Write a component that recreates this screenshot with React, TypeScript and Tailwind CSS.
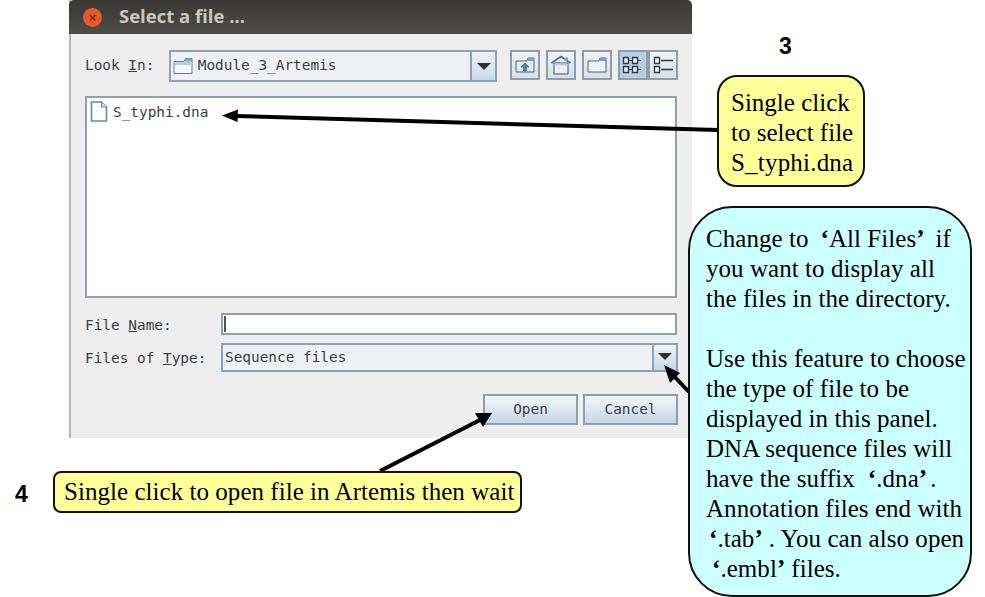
import React from "react";

const mono = "font-['DejaVu_Sans_Mono',monospace] text-[14.4px] text-[#3a3f45]";
const serif = "font-['Liberation_Serif',serif] text-[25px] leading-[30px] text-black whitespace-pre";
const step = "font-['Liberation_Sans',sans-serif] font-bold text-[23px] leading-none text-black";

const FolderIcon = () => (
  <svg width="20" height="18" viewBox="0 0 20 18" fill="none">
    <path d="M1 4.500h10l1.500-3H19v15H1z" fill="#f4f6f9" stroke="#5f7f9f" strokeWidth="1" />
    <path d="M1.500 5h17v3h-17z" fill="#b9cde2" />
    <path d="M12.500 1.500H19v3h-8z" fill="#7f9fc4" />
  </svg>
);

const FileIcon = () => (
  <svg width="18" height="21" viewBox="0 0 18 21" fill="none">
    <path d="M1.500 1h10l5 5v14h-15z" fill="#fff" stroke="#5b8ab8" strokeWidth="1.6" />
    <path d="M11.500 1v5h5" fill="#dbe6f1" stroke="#5b8ab8" strokeWidth="1.2" />
  </svg>
);

const UpIcon = () => (
  <svg width="20" height="18" viewBox="0 0 20 18" fill="none">
    <path d="M1 5h11l1-3h6v14H1z" fill="#e4ebf2" stroke="#56606c" />
    <path d="M13 2h6v3h-7z" fill="#7f9fc4" />
    <path d="M10 7l-4 4h2.500v4h3v-4H14z" fill="#4f86bd" stroke="#2f4f70" strokeWidth="0.6" />
  </svg>
);

const HomeIcon = () => (
  <svg width="22" height="20" viewBox="0 0 22 20" fill="none">
    <path d="M1.500 8L11 1.500 20.500 8" stroke="#3f6f9f" strokeWidth="1.6" />
    <path d="M14 2.500h4v3h-4z" fill="#7f9fc4" />
    <path d="M4 8h14v11H4z" fill="#e8eef4" stroke="#4a5560" />
    <path d="M4.500 8.500h13v2h-13z" fill="#b9cde2" />
  </svg>
);

const NewFolderIcon = () => (
  <svg width="20" height="18" viewBox="0 0 20 18" fill="none">
    <path d="M1 5h11l1-3h6v14H1z" fill="#eef2f6" stroke="#56606c" />
    <path d="M13 2h6v3h-7z" fill="#7f9fc4" />
  </svg>
);

const GridIcon = () => (
  <svg width="22" height="18" viewBox="0 0 22 18" fill="none" stroke="#2f3840" strokeWidth="1.300">
    <path d="M1.500 1.500h5v6h-5zM10.500 1.500h5v6h-5zM1.500 10.500h5v6h-5zM10.500 10.500h5v6h-5z" fill="#e3ebf3" />
    <path d="M7 4.500h3M16 4.500h3M7 13.500h3M16 13.500h3" strokeWidth="1" />
  </svg>
);

const ListIcon = () => (
  <svg width="22" height="18" viewBox="0 0 22 18" fill="none" stroke="#2f3840" strokeWidth="1.300">
    <path d="M2.500 1.500h5v6h-5zM2.500 10.500h5v6h-5z" fill="#eef2f6" />
    <path d="M9 4.500h12M9 13.500h12" />
  </svg>
);

const Caret = () => <div className="w-0 h-0 border-x-[7px] border-x-transparent border-t-[7px] border-t-[#2f2f2f]" />;

const ToolButton = ({ children, on }: { children: React.ReactNode; on?: boolean }) => (
  <div
    className={`w-[30px] h-[30px] flex items-center justify-center border-2 border-[#8d9dac] ${
      on ? "bg-[#b9cde0]" : "bg-gradient-to-b from-[#f0f3f6] to-[#d3dfea]"
    }`}
  >
    {children}
  </div>
);

const ActionButton = ({ children }: { children: React.ReactNode }) => (
  <div
    className={`w-[95px] h-[31px] flex items-center justify-center border-2 border-[#8d9dac] bg-gradient-to-b from-[#f3f6f9] to-[#c5d6e7] ${mono}`}
  >
    {children}
  </div>
);

const Q = ({ children, className }: { children: string; className: string }) => (
  <span className={`font-bold ${className}`}>{children}</span>
);

export default function App() {
  return (
    <div className="relative w-[985px] h-[597px] bg-white overflow-hidden">
      {/* dialog */}
      <div className="ml-[69px] w-[623px] h-[438px] flex flex-col bg-[#eeeeee] border-l-2 border-l-[#b5b5b5]">
        <div className="h-[34px] -ml-[2px] shrink-0 flex items-center pl-[14px] gap-[17px] rounded-t-[5px] bg-gradient-to-b from-[#3a3935] to-[#4e4d48]">
          <div className="w-[19px] h-[19px] rounded-full bg-[#e9592c] flex items-center justify-center text-[#7a2c12] text-[13px] leading-none font-['Liberation_Sans',sans-serif] font-bold">
            ×
          </div>
          <span className="font-['Open_Sans',sans-serif] font-bold text-[18.5px] leading-[30px] pb-[2px] text-[#c9c7bf]">Select a file ...</span>
        </div>

        <div className="flex-1 flex flex-col pl-[14px] pr-[14px] pt-[16px]">
          <div className="flex items-start">
            <div className={`w-[84px] h-[31px] flex items-center ${mono}`}>
              <span className="whitespace-pre">
                Look <span className="underline">I</span>n:
              </span>
            </div>
            <div className="w-[329px] h-[32px] flex border-2 border-[#8da1b6] bg-[#eef0f3]">
              <div className="flex-1 flex items-center gap-[5px] pl-[2px]">
                <FolderIcon />
                <span className={mono}>Module_3_Artemis</span>
              </div>
              <div className="w-[25px] flex items-center justify-center border-l-2 border-l-[#8da1b6] bg-gradient-to-b from-[#f0f3f6] to-[#c8d8e8]">
                <Caret />
              </div>
            </div>
            <div className="ml-[13px] flex gap-[6px]">
              <ToolButton><UpIcon /></ToolButton>
              <ToolButton><HomeIcon /></ToolButton>
              <ToolButton><NewFolderIcon /></ToolButton>
              <div className="flex">
                <ToolButton on><GridIcon /></ToolButton>
                <ToolButton><ListIcon /></ToolButton>
              </div>
            </div>
          </div>

          <div className="mt-[14px] mr-[1px] h-[202px] border-2 border-[#8da1b6] bg-white pl-[3px] pt-[3px] flex items-start gap-[5px]">
            <FileIcon />
            <span className={`${mono} leading-[23px]`}>S_typhi.dna</span>
          </div>

          <div className="mt-[15px] h-[22px] flex items-start">
            <div className={`w-[136px] leading-[24px] ${mono}`}>
              File <span className="underline">N</span>ame:
            </div>
            <div className="w-[456px] h-[22px] border-2 border-[#8da1b6] bg-white pl-[1px] py-[1px]">
              <div className="w-[2px] h-full bg-[#555]" />
            </div>
          </div>

          <div className="mt-[8px] h-[29px] flex items-start">
            <div className={`w-[136px] leading-[30px] ${mono}`}>
              Files of <span className="underline">T</span>ype:
            </div>
            <div className="w-[457px] h-[29px] flex border-2 border-[#8da1b6] bg-[#eef0f3]">
              <div className={`flex-1 flex items-center pl-[2px] ${mono}`}>Sequence files</div>
              <div className="w-[24px] pt-[8px] flex justify-center border-l-2 border-l-[#8da1b6] bg-gradient-to-b from-[#f0f3f6] to-[#c8d8e8]">
                <Caret />
              </div>
            </div>
          </div>

          <div className="mt-[22px] flex justify-end gap-[5px]">
            <ActionButton>Open</ActionButton>
            <ActionButton>Cancel</ActionButton>
          </div>
        </div>
      </div>

      {/* arrows laid over the dialog */}
      <svg className="absolute inset-0 pointer-events-none" width="985" height="597" viewBox="0 0 985 597" fill="none">
        <path d="M718 130L236 116" stroke="#000" strokeWidth="4" />
        <path d="M222 115.500L238 109.500L237.500 122z" fill="#000" />
        <path d="M380 471L480 420" stroke="#000" strokeWidth="4" />
        <path d="M492 413L483 427L475 413z" fill="#000" />
        <path d="M689 392L672 374" stroke="#000" strokeWidth="4" />
        <path d="M664 365L680 373L670 383z" fill="#000" />
      </svg>

      {/* annotations */}
      <span className={`absolute left-[779px] top-[35px] ${step}`}>3</span>
      <span className={`absolute left-[15px] top-[483px] ${step}`}>4</span>

      <div className={`absolute left-[717px] top-[75px] w-[148px] h-[112px] rounded-[20px] border-2 border-[#111] bg-[#ffff99] pl-[12px] pt-[11px] ${serif}`}>
        <div>Single click</div>
        <div>to select file</div>
        <div className="tracking-[0.2px]">S_typhi.dna</div>
      </div>

      <div className={`absolute left-[53px] top-[471px] w-[469px] h-[42px] rounded-[8px] border-2 border-[#111] bg-[#ffff99] pl-[9px] pt-[4px] tracking-[0.04px] ${serif}`}>
        Single click to open file in Artemis then wait
      </div>

      <div className={`absolute left-[688px] top-[206px] w-[284px] h-[391px] rounded-[44px] border-2 border-[#111] bg-[#ccffff] pl-[16px] pt-[16px] tracking-[0.05px] ${serif}`}>
        <div>Change to<Q className="ml-[12px]">‘</Q>All Files<Q className="mr-[11px]">’</Q>if</div>
        <div>you want to display all</div>
        <div>the files in the directory.</div>
        <div>&nbsp;</div>
        <div>Use this feature to choose</div>
        <div>the type of file to be</div>
        <div>displayed in this panel.</div>
        <div>DNA sequence files will</div>
        <div>have the suffix<Q className="ml-[13px]">‘</Q>.dna<Q className="mr-[3px]">’</Q>.</div>
        <div>Annotation files end with</div>
        <div><Q className="ml-[3px]">‘</Q>.tab<Q className="mr-[6px]">’</Q>. You can also open</div>
        <div><Q className="ml-[6px]">‘</Q>.embl<Q className="mr-[6px]">’</Q>files.</div>
      </div>
    </div>
  );
}
